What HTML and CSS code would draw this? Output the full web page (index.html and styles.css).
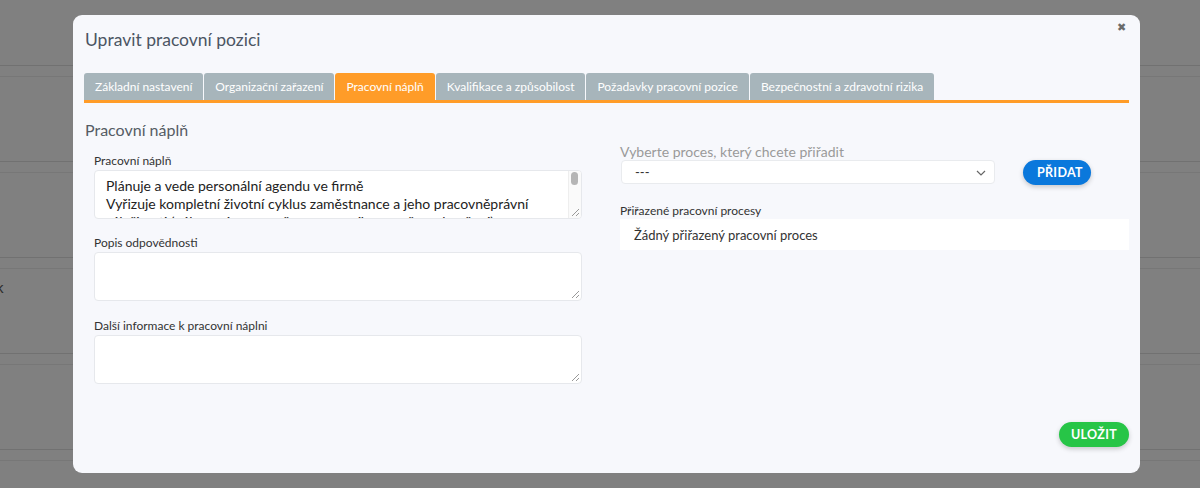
FILE: index.html
```html
<!DOCTYPE html>
<html lang="cs">
<head>
<meta charset="utf-8">
<title>Upravit pracovní pozici</title>
<link rel="stylesheet" href="styles.css">
</head>
<body>
<div class="backdrop">
  <div class="bg-row bg-first"></div>
  <div class="bg-row"></div>
  <div class="bg-row"><span class="bg-glyph">k</span></div>
  <div class="bg-row"></div>
  <div class="bg-row bg-last"></div>
</div>

<div class="modal">
  <div class="modal-head">
    <h1 class="modal-title">Upravit pracovní pozici</h1>
    <span class="close">&#x2716;</span>
  </div>
  <div class="tabs">
    <div class="tab">Základní nastavení</div>
    <div class="tab">Organizační zařazení</div>
    <div class="tab active">Pracovní náplň</div>
    <div class="tab">Kvalifikace a způsobilost</div>
    <div class="tab">Požadavky pracovní pozice</div>
    <div class="tab">Bezpečnostní a zdravotní rizika</div>
  </div>
  <h2 class="section-title">Pracovní náplň</h2>
  <div class="cols">
    <div class="col-left">
      <label class="label">Pracovní náplň</label>
      <div class="textarea filled">
        <div class="ta-text">Plánuje a vede personální agendu ve firmě<br>Vyřizuje kompletní životní cyklus zaměstnance a jeho pracovněprávní<br>záležitosti (nábor, nástup, změny pracovního poměru, ukončení)</div>
        <div class="scrollbar"><div class="thumb"></div></div>
        <span class="grip"></span>
      </div>
      <label class="label">Popis odpovědnosti</label>
      <div class="textarea"><span class="grip"></span></div>
      <label class="label">Další informace k pracovní náplni</label>
      <div class="textarea"><span class="grip"></span></div>
    </div>
    <div class="col-right">
      <div class="select-label">Vyberte proces, který chcete přiřadit</div>
      <div class="select-row">
        <div class="select">
          <span>---</span>
          <svg class="chev" width="10" height="6" viewBox="0 0 10 6"><path d="M1 1l4 4 4-4" fill="none" stroke="#666" stroke-width="1.2"/></svg>
        </div>
        <button class="btn btn-blue">PŘIDAT</button>
      </div>
      <label class="label assigned-label">Přiřazené pracovní procesy</label>
      <div class="assigned">Žádný přiřazený pracovní proces</div>
    </div>
  </div>
  <div class="footer">
    <button class="btn btn-green">ULOŽIT</button>
  </div>
</div>
</body>
</html>
```
FILE: styles.css
```css
* { box-sizing: border-box; }
html, body {
  margin: 0;
  padding: 0;
  width: 1200px;
  height: 488px;
  overflow: hidden;
  background: #808080;
  font-family: Lato, "Noto Sans", sans-serif;
}
.backdrop {
  display: flex;
  flex-direction: column;
  padding-top: 65px;
  height: 488px;
  overflow: hidden;
}
.bg-row {
  height: 96px;
  flex: none;
  border-top: 1px solid #717171;
  position: relative;
}
.bg-row.bg-last { height: 36px; }
.bg-row::after {
  content: "";
  position: absolute;
  left: 0; right: 0;
  top: 10px;
  height: 1px;
  background: #777;
}
.bg-glyph {
  position: absolute;
  left: -4px;
  top: 20px;
  color: #2c2c2c;
  font-size: 15px;
}
.modal {
  position: absolute;
  left: 73px;
  top: 15px;
  width: 1067px;
  height: 458px;
  background: #f7f8fc;
  border-radius: 9px;
  padding: 0 11px 0 11px;
  display: flex;
  flex-direction: column;
}
.modal-head {
  display: flex;
  justify-content: space-between;
  align-items: flex-start;
  height: 58px;
}
.modal-title {
  margin: 14px 0 0 1px;
  font-size: 17.5px;
  font-weight: 400;
  color: #4b5563;
}
.close {
  margin: 5px 3px 0 0;
  font-size: 11px;
  color: #6b6b6b;
}
.tabs {
  display: flex;
  gap: 1px;
  border-bottom: 3px solid #ff9c28;
  height: 30px;
}
.tab {
  height: 27px;
  background: #a7b5bb;
  color: #fff;
  font-size: 12px;
  padding: 0 11px;
  display: flex;
  align-items: center;
  border-radius: 3px 3px 0 0;
  white-space: nowrap;
}
.tab.active { background: #ff9c28; }
.section-title {
  margin: 17px 0 0 1px;
  font-size: 16px;
  font-weight: 400;
  color: #555c64;
}
.cols {
  display: flex;
  margin-top: 14px;
}
.col-left {
  width: 488px;
  margin-left: 10px;
  display: flex;
  flex-direction: column;
}
.label {
  font-size: 12px;
  color: #333;
  height: 17px;
  line-height: 15px;
  display: block;
}
.textarea {
  height: 49px;
  background: #fff;
  border: 1px solid #e6e8ec;
  border-radius: 4px;
  position: relative;
  margin-bottom: 17px;
  overflow: hidden;
}
.textarea.filled { margin-bottom: 16px; }
.ta-text {
  padding: 6px 0 0 11px;
  font-size: 14px;
  line-height: 18px;
  color: #222;
  white-space: nowrap;
}
.scrollbar {
  position: absolute;
  right: 0; top: 0; bottom: 0;
  width: 13px;
  background: #fafafa;
  border-left: 1px solid #eee;
}
.thumb {
  width: 7px;
  height: 13px;
  margin: 1px 0 0 2px;
  border-radius: 4px;
  background: #b5b5b5;
}
.grip {
  position: absolute;
  right: 2px; bottom: 2px;
  width: 7px; height: 7px;
  background: linear-gradient(135deg, transparent 45%, #999 45%, #999 55%, transparent 55%, transparent 72%, #999 72%, #999 82%, transparent 82%);
}
.col-right {
  width: 509px;
  margin-left: 38px;
  margin-top: -9px;
  display: flex;
  flex-direction: column;
}
.select-label {
  font-size: 14px;
  color: #9a9a9a;
  height: 16px;
  line-height: 16px;
}
.select-row {
  display: flex;
  align-items: flex-start;
}
.select {
  width: 374px;
  height: 24px;
  margin-left: 1px;
  background: #fff;
  border: 1px solid #e9ebee;
  border-radius: 4px;
  display: flex;
  align-items: center;
  justify-content: space-between;
  padding: 0 8px 0 13px;
  font-size: 13px;
  color: #333;
}
.chev { margin-top: 1px; }
.btn {
  border: none;
  border-radius: 14px;
  color: #fff;
  font-family: Lato, "Noto Sans", sans-serif;
  font-weight: 700;
  font-size: 12.5px;
  letter-spacing: 0.3px;
  height: 25px;
  padding: 0 14px;
  box-shadow: 0 2px 5px rgba(0,0,0,0.2);
}
.btn-blue {
  background: #0a78dc;
  margin-left: 28px;
  width: 68px;
}
.assigned-label {
  margin-top: 18px;
}
.assigned {
  height: 31px;
  margin-top: -1px;
  background: #fff;
  font-size: 13px;
  color: #333;
  padding: 0 14px;
  display: flex;
  align-items: center;
}
.footer {
  margin-top: auto;
  margin-bottom: 26px;
  display: flex;
  justify-content: flex-end;
}
.btn-green {
  background: #27c547;
  width: 70px;
  padding: 0;
}
```
